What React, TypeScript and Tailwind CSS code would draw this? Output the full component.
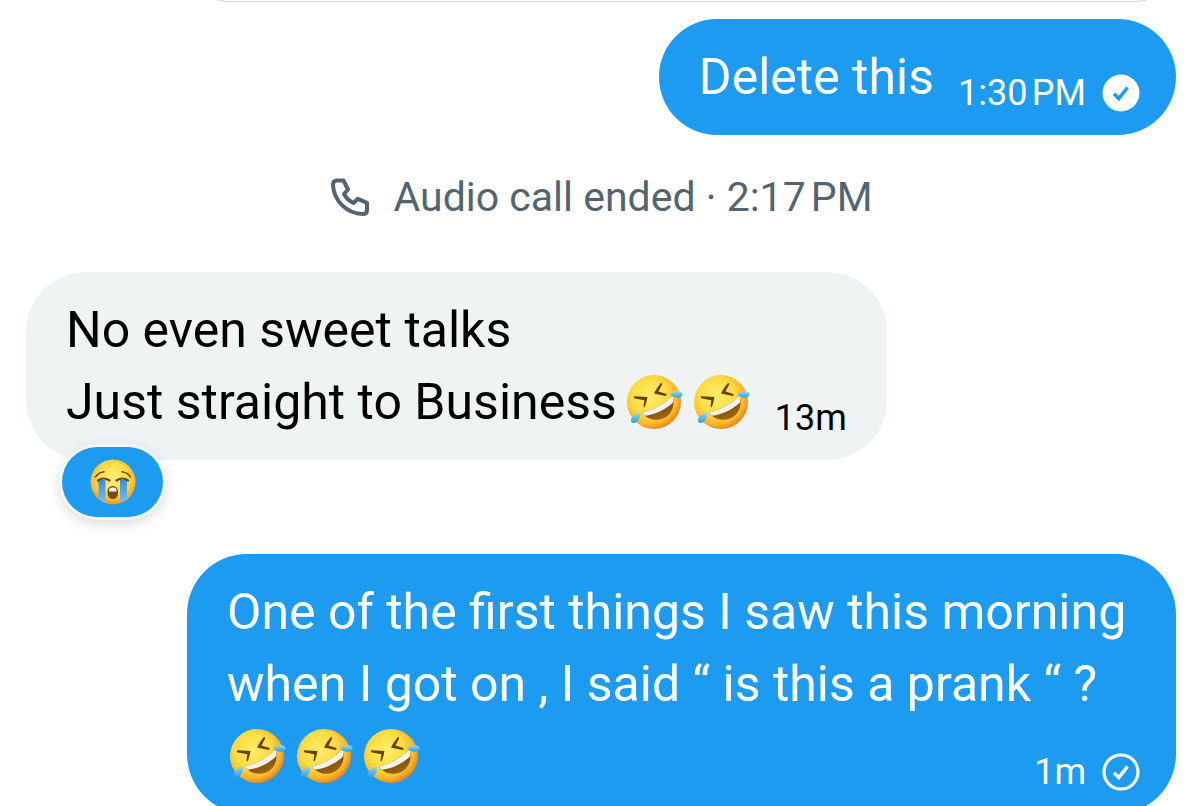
import type { ReactNode } from "react";
import clsx from "clsx";

function LaughEmoji() {
  return (
    <svg viewBox="0 0 60 60" className="size-[60px] shrink-0" role="img" aria-label="rolling on the floor laughing">
      <defs>
        <radialGradient id="laughFace" cx="0.42" cy="0.4" r="0.62">
          <stop offset="0" stopColor="#ffee6a" />
          <stop offset="0.55" stopColor="#fedb41" />
          <stop offset="0.82" stopColor="#fbb62b" />
          <stop offset="1" stopColor="#e8841a" />
        </radialGradient>
        <linearGradient id="laughMouth" x1="0" y1="0" x2="0.5" y2="1">
          <stop offset="0" stopColor="#5b3306" />
          <stop offset="1" stopColor="#9a6410" />
        </linearGradient>
        <linearGradient id="laughTear" x1="0" y1="0" x2="0" y2="1">
          <stop offset="0" stopColor="#8fdcfa" />
          <stop offset="1" stopColor="#2d9fe0" />
        </linearGradient>
      </defs>
      <circle cx="30" cy="30" r="27" fill="url(#laughFace)" />
      <path d="M18 40.500 C29 38 40 32 48.500 23.500 C51.500 33 48 43 39 46.500 C31 49.500 22 47 18 40.500 Z" fill="url(#laughMouth)" />
      <path d="M18 40.500 C29 38 40 32 48.500 23.500 C49.500 26.500 49.500 28.500 49 30.500 C41 38 31 42.500 21 43.800 C19.800 42.800 18.800 41.800 18 40.500 Z" fill="#f6f1ea" />
      <path d="M10.500 24.200 L23.500 25 C22.800 29 21.800 32.500 20.500 35.500 C19.500 35 19.400 34.300 19.600 33.500 L20.300 28.200 L11 26.600 C9.500 26 9.500 24.500 10.500 24.200 Z" fill="#6b4105" />
      <path d="M37 11 C34.500 14 32 17.500 30 21.400 L41.500 24 C43 23.700 43 22.200 41.800 21.800 L34.500 19.500 L38 12.800 C38.500 11.500 37.800 10.700 37 11 Z" fill="#6b4105" />
      <path d="M46 22.500 C50 18.800 57 18 58.300 21.300 C59.500 25.500 52.500 28.300 46 22.500 Z" fill="url(#laughTear)" />
      <path d="M16 40.200 C16.500 45.500 13.500 51.800 9 51 C4.500 49.800 7 43 16 40.200 Z" fill="url(#laughTear)" />
    </svg>
  );
}

function CryEmoji() {
  return (
    <svg viewBox="0 0 46 46" className="size-[46px]" role="img" aria-label="loudly crying face">
      <defs>
        <radialGradient id="cryFace" cx="0.5" cy="0.42" r="0.6">
          <stop offset="0" stopColor="#fff07a" />
          <stop offset="0.55" stopColor="#fedd48" />
          <stop offset="0.82" stopColor="#fab62c" />
          <stop offset="1" stopColor="#ea881a" />
        </radialGradient>
        <linearGradient id="cryTear" x1="0" y1="0" x2="0" y2="1">
          <stop offset="0" stopColor="#3a8fd6" />
          <stop offset="1" stopColor="#79bdf4" />
        </linearGradient>
      </defs>
      <circle cx="23" cy="23" r="22.500" fill="url(#cryFace)" />
      <path d="M8.500 21 H15.500 V44 Q12 42 8.500 39.500 Z" fill="url(#cryTear)" />
      <path d="M30 21 H37 V39.500 Q34 42 30 44 Z" fill="url(#cryTear)" />
      <path d="M8 21.500 Q13.500 17.500 19.500 21.500 M26.500 21.500 Q32.500 17.500 38 21.500" fill="none" stroke="#70470c" strokeWidth="2.200" strokeLinecap="round" />
      <path d="M5.500 18 Q8.500 13.500 14 12.800 M40.500 18 Q37.500 13.500 32 12.800" fill="none" stroke="#70470c" strokeWidth="1.600" strokeLinecap="round" />
      <rect x="17.500" y="27" width="10.500" height="13" rx="5.200" fill="#7a4a0c" />
      <path d="M19 32.500 Q18.500 28.500 22.800 28.500 Q27 28.500 26.600 32.500 Z" fill="#fff" />
    </svg>
  );
}

function PhoneIcon() {
  return (
    <svg viewBox="0 0 40 40" className="size-10" fill="none" stroke="currentColor" strokeWidth="4" strokeLinejoin="round" aria-hidden="true">
      <path d="M7 3.500 H13.500 L18 12.500 L14 17 C16 21 19.500 24 23.500 26 L28 21.800 L37 25.800 V33 C37 35.500 35.500 37 33 37 C16.500 36.500 3.500 23.500 3 7.500 C3 5 4.500 3.500 7 3.500 Z" />
    </svg>
  );
}

function SentIcon({ seen }: { seen?: boolean }) {
  return (
    <svg viewBox="0 0 38 38" className="size-[38px]" fill="none" aria-hidden="true">
      {seen ? (
        <circle cx="19" cy="19" r="18.500" fill="#fff" />
      ) : (
        <circle cx="19" cy="19" r="17" stroke="#fff" strokeWidth="3.200" />
      )}
      <path d="M12 19.800 L16.800 24.500 L25.500 13.500" stroke={seen ? "#1d9bf0" : "#fff"} strokeWidth="3.600" />
    </svg>
  );
}

type BubbleProps = {
  mine?: boolean;
  time: string;
  status?: ReactNode;
  lastLine: ReactNode;
  children?: ReactNode;
};

// the time sits on the same row as the last line of the message
function Bubble({ mine, time, status, lastLine, children }: BubbleProps) {
  return (
    <div
      className={clsx(
        "rounded-[60px] py-[22px] text-[50px] leading-[72px]",
        mine ? "bg-[#1d9bf0] pl-10 pr-9 text-white" : "bg-[#eff3f4] px-10 text-black"
      )}
    >
      {children}
      <div className="flex items-end justify-between gap-6">
        <p className="flex h-[72px] items-center gap-[7px]">{lastLine}</p>
        <div className="flex shrink-0 items-center gap-4 text-[36px] leading-10">
          <time>{time}</time>
          {status}
        </div>
      </div>
    </div>
  );
}

export default function App() {
  return (
    <main className="h-screen overflow-hidden bg-white font-['Roboto','Liberation_Sans',sans-serif]">
      {/* bottom edge of the card that has scrolled away */}
      <div className="flex h-0.5 items-end overflow-hidden pl-[189px] pr-6">
        <div className="h-24 flex-1 rounded-[40px] border border-[#cfd9de]" />
      </div>

      <div className="flex flex-col pt-[17px] pl-[26px] pr-6">
        <div className="max-w-[86%] self-end">
          <Bubble mine time={"1:30\u202fPM"} status={<SentIcon seen />} lastLine="Delete this" />
        </div>

        <div className="mt-[34px] mb-[47px] flex items-center justify-center gap-6 text-[41px] leading-14 text-[#536471]">
          <PhoneIcon />
          <span>Audio call ended · {"2:17\u202fPM"}</span>
        </div>

        <div className="relative max-w-[86%] self-start">
          <Bubble
            time="13m"
            lastLine={
              <>
                <span>Just straight to Business</span>
                <LaughEmoji />
                <LaughEmoji />
              </>
            }
          >
            <p>No even sweet talks</p>
          </Bubble>
          <button
            type="button"
            className="absolute -bottom-[57px] left-9 flex h-[70px] w-[101px] items-center justify-center rounded-full bg-[#1d9bf0] shadow-[0_4px_16px_rgba(0,0,0,0.2)] ring-3 ring-white/60"
          >
            <CryEmoji />
          </button>
        </div>

        <div className="mt-[94px] max-w-[86%] self-end">
          <Bubble
            mine
            time="1m"
            status={<SentIcon />}
            lastLine={
              <>
                <LaughEmoji />
                <LaughEmoji />
                <LaughEmoji />
              </>
            }
          >
            <p>One of the first things I saw this morning when I got on , I said “ is this a prank “ ?</p>
          </Bubble>
        </div>
      </div>
    </main>
  );
}
